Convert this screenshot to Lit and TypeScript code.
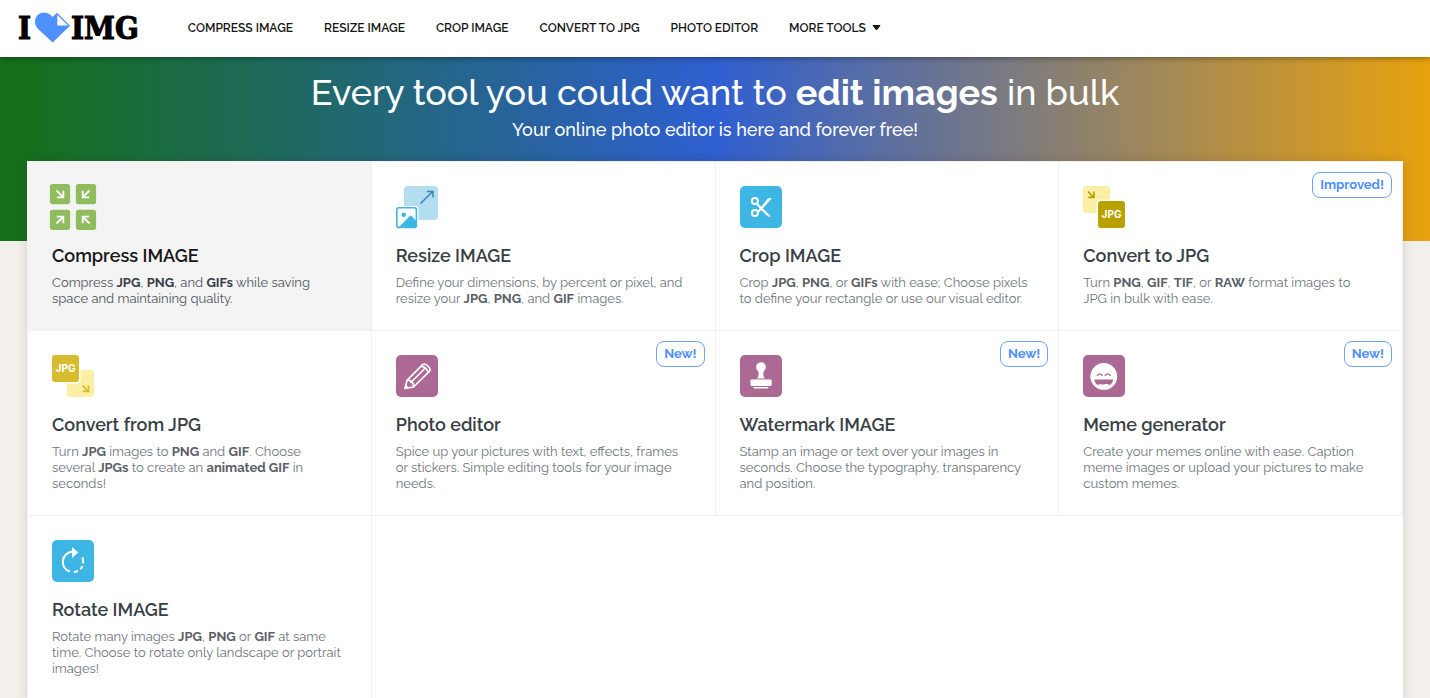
import { LitElement, html, css, svg } from "lit";
import { customElement, property } from "lit/decorators.js";

const jpgIcon = (x: number, y: number, fill: string) => svg`
  <rect x=${x - 1.5} y=${y - 1.5} width="30" height="30" rx="4" fill="#fff"/>
  <rect x=${x} y=${y} width="27" height="27" rx="3" fill=${fill}/>
  <text x=${x + 13.5} y=${y + 17} text-anchor="middle" fill="#fff" font-family="Inter, sans-serif" font-weight="700" font-size="10">JPG</text>`;

const icons: Record<string, unknown> = {
  compress: svg`
    <g fill="#8fbc5d"><rect width="18.4" height="18.4" rx="2.5"/><rect x="23.6" width="18.4" height="18.4" rx="2.5"/><rect y="23.6" width="18.4" height="18.4" rx="2.5"/><rect x="23.6" y="23.6" width="18.4" height="18.4" rx="2.5"/></g>
    <g fill="none" stroke="#fff" stroke-width="1.7">
      <path d="M6 6l6 6M12.2 6.3v5.9H6.3"/><path d="M36 6l-6 6M29.8 6.3v5.9h5.9"/>
      <path d="M6 36l6-6M12.2 35.7v-5.9H6.3"/><path d="M36 36l-6-6M29.8 35.7v-5.9h5.9"/>
    </g>`,
  resize: svg`
    <rect x="8" width="34" height="34" rx="4" fill="#b3def0"/>
    <path d="M24.5 17.5L37 5.3M31 5.5h6v6" fill="none" stroke="#3a83b4" stroke-width="1.5"/>
    <rect x="-1" y="20" width="23.5" height="23" rx="3" fill="#fff"/>
    <rect x=".8" y="21.8" width="19.6" height="19.6" rx="2" fill="#fff" stroke="#3db6e4" stroke-width="1.6"/>
    <circle cx="7.7" cy="28.7" r="2.3" fill="#3db6e4"/>
    <path d="M3 41l10.5-10.8c.8-.8 1.5-.8 2.3 0L20 34.5V41z" fill="#3db6e4"/>`,
  crop: svg`
    <rect width="42" height="42" rx="5" fill="#3db6e4"/>
    <g fill="none" stroke="#fff" stroke-width="2"><circle cx="14.9" cy="15.1" r="3"/><circle cx="14.9" cy="27" r="3"/></g>
    <path d="M17 16.5l14 14h-3.2L16 18.6zM17 25.8L28 12.3h4L18.5 27z" fill="#fff"/>`,
  tojpg: svg`
    <rect width="27" height="27" rx="3" fill="#fbeea5"/>
    <path d="M5 5.5l5.6 5.6M11 5.5v5.9H5.2" fill="none" stroke="#b9a100" stroke-width="1.7"/>
    ${jpgIcon(15, 15, "#b9a100")}`,
  fromjpg: svg`
    <rect x="15" y="15" width="27" height="27" rx="3" fill="#fbeea5"/>
    <path d="M30.5 30.5l5.6 5.6M36.5 30.5v5.9h-5.8" fill="none" stroke="#d6bd2f" stroke-width="1.7"/>
    ${jpgIcon(0, 0, "#d6bd2f")}`,
  edit: svg`
    <rect width="42" height="42" rx="5" fill="#ab6993"/>
    <g fill="none" stroke="#fff" stroke-width="1.7" stroke-linejoin="round">
      <path d="M8.9 33.4l2.3-8.3L26.6 9.7c2.6-2.5 9.2 3.8 6.8 6.6L17.5 32z"/>
      <path d="M11.2 25.1c3.8-.2 6.8 2.8 6.3 6.9M14.3 28L29.3 13M25.2 11.3c3.2-.2 7 3.6 6.7 6.7"/>
    </g><path d="M8.9 33.4l1-3.7 2.8 2.7z" fill="#fff"/>`,
  stamp: svg`
    <rect width="42" height="42" rx="5" fill="#ab6993"/>
    <g fill="#fff"><path d="M17.5 23.2c1.4-2.5 1.6-5 .5-7.3a4.9 4.9 0 1 1 6 0c-1.1 2.3-.9 4.8.5 7.3z"/>
    <rect x="10.5" y="24.4" width="21.2" height="6.6" rx="1"/><path d="M13.2 32h15.5c-.4 1-1 1.6-2 1.6H15.2c-1 0-1.7-.6-2-1.6z"/></g>
    <path d="M17.5 23.2h7l.6 1.2h-8.2z" fill="#d9c3d1"/>`,
  meme: svg`
    <rect width="42" height="42" rx="5" fill="#ab6993"/><circle cx="20.8" cy="21.4" r="13.4" fill="#fff"/>
    <g fill="none" stroke="#ab6993" stroke-width="1.3"><path d="M14.2 21c.7-2.8 4.5-2.8 5.3 0M22.1 21c.7-2.8 4.5-2.8 5.3 0"/></g>
    <path d="M11.3 24.5h18.8c-.2 4-3.8 6.9-9.3 6.9s-9.3-2.9-9.5-6.9z" fill="#ab6993"/>
    <path d="M14.6 30.3c2.4-2.2 4.2-.4 6.2-.9 2-.5 4.1-.7 6 .9-3.5 2.1-8.7 2.1-12.2 0z" fill="#fff"/>`,
  rotate: svg`
    <rect width="42" height="42" rx="5" fill="#3db6e4"/>
    <g fill="none" stroke="#fff" stroke-width="2"><path d="M20.8 11.5c-5.8.4-10 4.9-10 10.3 0 4.5 2.8 8.3 7 9.7"/>
    <path d="M21.8 32.1c1.4-.1 2.7-.4 4-1.1M28.4 29.1c.8-.8 1.5-1.7 2-2.9M31.1 23.4c.3-2.1.1-4.1-.8-6"/></g>
    <path d="M20 7l6.3 5.4L20 17.9z" fill="#fff"/>`,
};

interface Tool { icon: string; name: string; text: unknown; badge?: string; active?: boolean }

const tools: Tool[] = [
  { icon: "compress", name: "Compress IMAGE", active: true, text: html`Compress <b>JPG</b>, <b>PNG</b>, and <b>GIFs</b> while saving space and maintaining quality.` },
  { icon: "resize", name: "Resize IMAGE", text: html`Define your dimensions, by percent or pixel, and resize your <b>JPG</b>, <b>PNG</b>, and <b>GIF</b> images.` },
  { icon: "crop", name: "Crop IMAGE", text: html`Crop <b>JPG</b>, <b>PNG</b>, or <b>GIFs</b> with ease; Choose pixels to define your rectangle or use our visual editor.` },
  { icon: "tojpg", name: "Convert to JPG", badge: "Improved!", text: html`Turn <b>PNG</b>, <b>GIF</b>, <b>TIF</b>, or <b>RAW</b> format images to JPG in bulk with ease.` },
  { icon: "fromjpg", name: "Convert from JPG", text: html`Turn <b>JPG</b> images to <b>PNG</b> and <b>GIF</b>. Choose several <b>JPGs</b> to create an <b>animated GIF</b> in seconds!` },
  { icon: "edit", name: "Photo editor", badge: "New!", text: "Spice up your pictures with text, effects, frames or stickers. Simple editing tools for your image needs." },
  { icon: "stamp", name: "Watermark IMAGE", badge: "New!", text: "Stamp an image or text over your images in seconds. Choose the typography, transparency and position." },
  { icon: "meme", name: "Meme generator", badge: "New!", text: "Create your memes online with ease. Caption meme images or upload your pictures to make custom memes." },
  { icon: "rotate", name: "Rotate IMAGE", text: html`Rotate many images <b>JPG</b>, <b>PNG</b> or <b>GIF</b> at same time. Choose to rotate only landscape or portrait images!` },
];

@customElement("tool-card")
class ToolCard extends LitElement {
  @property({ attribute: false }) tool!: Tool;

  static styles = css`
    :host { display: block; }
    .card {
      position: relative; display: block; box-sizing: border-box; height: 100%;
      padding: 24px 28px 23px 24px; border-right: 1px solid #f1f1f3; border-bottom: 1px solid #f1f1f3;
      color: #70757c; text-decoration: none; font-size: 13px; line-height: 16px;
    }
    .icon { display: block; width: 42px; height: 42px; overflow: visible; }
    h2 { margin: 16px 0 7px; color: #383e45; font-size: 18px; line-height: 24px; font-weight: 600; }
    p { margin: 0; }
    b { font-weight: 700; color: #5b6067; }
    .badge {
      position: absolute; top: 10px; right: 10px; padding: 4px 7px; border: 1px solid #6aa2ff;
      border-radius: 8px; color: #4d90fe; font-size: 13px; font-weight: 700;
    }
    .active { background: #f4f4f4; color: #50555c; }
    .active h2 { color: #161616; }
    .active b { color: #383e45; }
    .active .icon { transform: scale(1.1); }
  `;

  render() {
    const t = this.tool;
    return html`<a class="card ${t.active ? "active" : ""}" href="#${t.icon}">
      <svg class="icon" viewBox="0 0 42 42" aria-hidden="true">${icons[t.icon]}</svg>
      <h2>${t.name}</h2>
      <p>${t.text}</p>
      ${t.badge ? html`<span class="badge">${t.badge}</span>` : ""}
    </a>`;
  }
}

@customElement("app-root")
class AppRoot extends LitElement {
  static styles = css`
    :host {
      display: block; min-height: 100vh; background: #f3f0ec;
      font-family: "Raleway", "Open Sans", sans-serif; color: #161616;
    }
    header {
      position: relative; z-index: 1; display: flex; align-items: center; box-sizing: border-box; height: 57px;
      padding: 0 18px 2px; background: #fff; box-shadow: 0 1px 6px rgba(0, 0, 0, 0.4);
    }
    .logo {
      display: flex; align-items: center; gap: 4px; margin-right: 49px; color: #000; text-decoration: none;
      font: 700 31px/40px "DejaVu Serif Condensed", "Liberation Serif", serif; -webkit-text-stroke: 1px #000;
    }
    .logo svg { display: block; margin-right: -3px; }
    nav { display: flex; gap: 31px; }
    nav a { display: flex; align-items: center; gap: 6px; color: #161616; font-size: 12px; line-height: 16px; font-weight: 600; text-decoration: none; white-space: nowrap; }
    .hero {
      box-sizing: border-box; height: 184px; padding-top: 11px; text-align: center; color: #fff;
      background: linear-gradient(90deg, #147016 0%, #2f5fd0 50%, #e8a20e 100%);
    }
    h1 { margin: 0; font-size: 36px; line-height: 48px; font-weight: 500; }
    h1 b { font-weight: 700; }
    .hero p { margin: 0; font-size: 18px; line-height: 28px; font-weight: 500; }
    main {
      display: grid; grid-template-columns: repeat(4, 1fr); margin: -80px 27px 0;
      border: 1px solid #f1f1f3; border-width: 1px 0 0 1px; background: #fff; box-shadow: 0 0 10px rgba(60, 30, 20, 0.16);
    }
  `;

  render() {
    return html`
      <header>
        <a class="logo" href="#home">
          <span>I</span>
          <svg width="35" height="31" viewBox="0 0 35 31" aria-hidden="true">
            <path d="M17.7 30.5L3 17C-1.2 12.5-.8 6 3.3 2.6 7.6-.9 14 .2 17.4 5L22 .8 35 13.8z" fill="#4d90fe"/>
            <path d="M22.3 3v10.6h10.8z" fill="#fff"/>
          </svg>
          <span>IMG</span>
        </a>
        <nav aria-label="Tools">
          <a href="#compress">COMPRESS IMAGE</a><a href="#resize">RESIZE IMAGE</a><a href="#crop">CROP IMAGE</a>
          <a href="#tojpg">CONVERT TO JPG</a><a href="#edit">PHOTO EDITOR</a>
          <a href="#more">MORE TOOLS <svg width="9" height="6" viewBox="0 0 9 6" aria-hidden="true"><path d="M1 .5h7l-3.5 4.5z" fill="#161616" stroke="#161616" stroke-linejoin="round"/></svg></a>
        </nav>
      </header>
      <section class="hero">
        <h1>Every tool you could want to <b>edit images</b> in bulk</h1>
        <p>Your online photo editor is here and forever free!</p>
      </section>
      <main>${tools.map((t) => html`<tool-card .tool=${t}></tool-card>`)}</main>
    `;
  }
}
